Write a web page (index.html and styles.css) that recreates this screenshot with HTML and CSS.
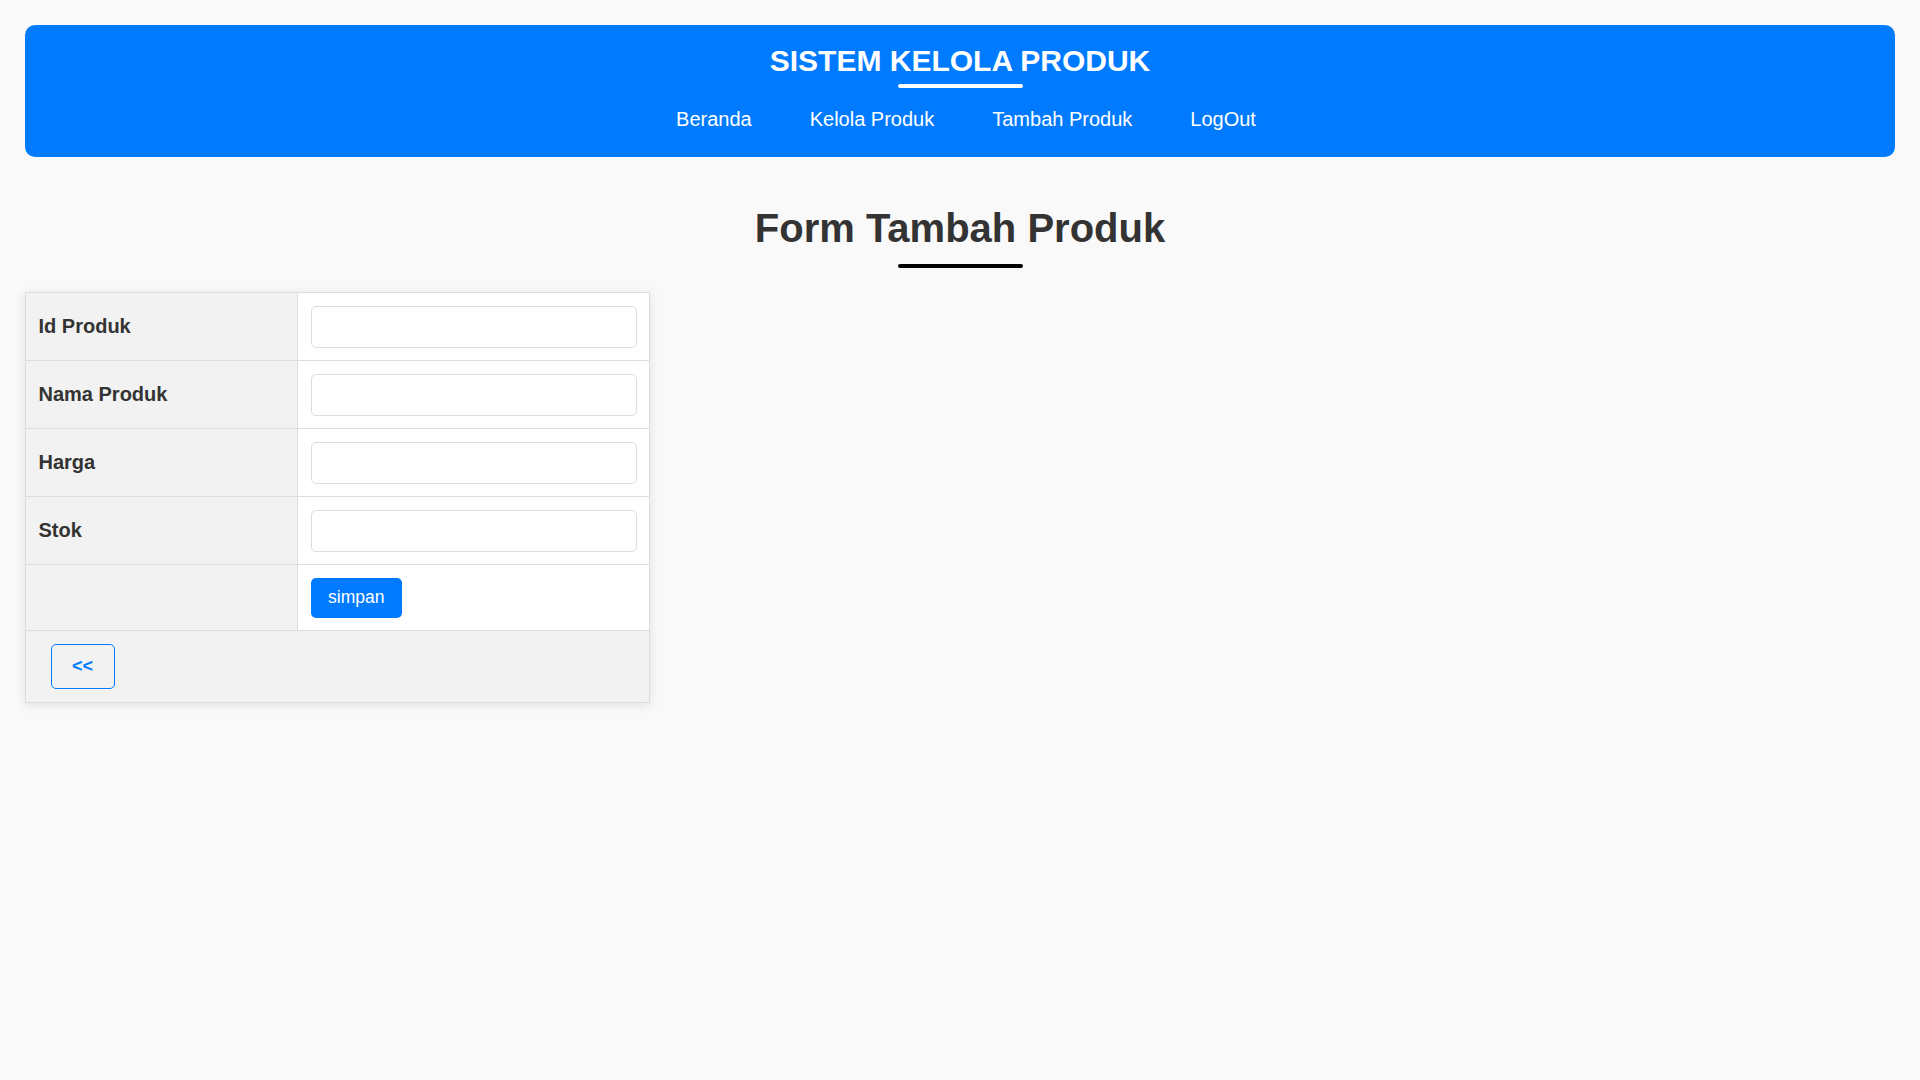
FILE: index.html
```html
<!DOCTYPE html>
<html lang="id">
<head>
<meta charset="utf-8">
<title>Form Tambah Produk</title>
<link rel="stylesheet" href="styles.css">
</head>
<body>
<div class="page">
  <header class="site-header">
    <h1 class="site-title">SISTEM KELOLA PRODUK</h1>
    <div class="title-line"></div>
    <nav class="site-nav">
      <a href="#">Beranda</a>
      <a href="#">Kelola Produk</a>
      <a href="#">Tambah Produk</a>
      <a href="#">LogOut</a>
    </nav>
  </header>

  <h2 class="page-title">Form Tambah Produk</h2>
  <div class="page-line"></div>

  <form class="product-form">
    <table class="form-table">
      <colgroup>
        <col class="col-label">
        <col class="col-input">
      </colgroup>
      <tr>
        <td class="label">Id Produk</td>
        <td class="field"><input type="text" class="text-input"></td>
      </tr>
      <tr>
        <td class="label">Nama Produk</td>
        <td class="field"><input type="text" class="text-input"></td>
      </tr>
      <tr>
        <td class="label">Harga</td>
        <td class="field"><input type="text" class="text-input"></td>
      </tr>
      <tr>
        <td class="label">Stok</td>
        <td class="field"><input type="text" class="text-input"></td>
      </tr>
      <tr>
        <td class="label"></td>
        <td class="field"><button type="button" class="btn-save">simpan</button></td>
      </tr>
      <tr>
        <td class="footer-cell" colspan="2"><a href="#" class="btn-back">&lt;&lt;</a></td>
      </tr>
    </table>
  </form>
</div>
</body>
</html>
```
FILE: styles.css
```css
* { box-sizing: border-box; }

html, body {
  margin: 0;
  padding: 0;
}

body {
  background: #f9f9f9;
  font-family: "Liberation Sans", Arial, sans-serif;
  color: #333;
}

.page {
  padding: 25px;
}

.site-header {
  background: #007bff;
  border-radius: 10px;
  padding: 18.75px 0 26px;
  text-align: center;
}

.site-title {
  margin: 0;
  font-size: 30px;
  font-weight: bold;
  color: #fff;
  line-height: normal;
}

.title-line {
  width: 125px;
  height: 4px;
  background: #fff;
  border-radius: 2px;
  margin: 6.5px auto 0;
}

.site-nav {
  margin-top: 19.3px;
  display: flex;
  justify-content: center;
  gap: 58px;
  padding-left: 12px;
}

.site-nav a {
  color: #fff;
  text-decoration: none;
  font-size: 20px;
  line-height: 23px;
}

.page-title {
  margin: 49.5px 0 0;
  text-align: center;
  font-size: 40px;
  font-weight: bold;
  color: #333;
  line-height: normal;
}

.page-line {
  width: 125px;
  height: 4px;
  background: #000;
  border-radius: 2px;
  margin: 13.3px auto 0;
}

.product-form {
  margin-top: 24px;
}

.form-table {
  width: 625px;
  table-layout: fixed;
  border-collapse: collapse;
  border: 1px solid #ddd;
  box-shadow: 0 2px 10px rgba(0, 0, 0, 0.1);
  background: #fff;
}

.col-label { width: 272px; }

.form-table td {
  border: 1px solid #ddd;
  padding: 12.5px;
  vertical-align: middle;
}

.label {
  background: #f2f2f2;
  font-weight: bold;
  font-size: 20px;
  color: #333;
}

.field {
  background: #fff;
}

.text-input {
  display: block;
  width: 100%;
  height: 42px;
  border: 1px solid #ddd;
  border-radius: 5px;
  background: #fff;
  font-family: inherit;
  font-size: 18px;
  padding: 0 10px;
}

.btn-save {
  display: block;
  height: 40px;
  padding: 0 17.5px;
  border: none;
  border-radius: 5px;
  background: #007bff;
  color: #fff;
  font-family: inherit;
  font-size: 17.5px;
}

.form-table .footer-cell {
  background: #f2f2f2;
  padding: 13px 12.5px 13px 24.5px;
}

.btn-back {
  display: flex;
  align-items: center;
  justify-content: center;
  width: 64px;
  height: 45px;
  border: 1px solid #007bff;
  border-radius: 5px;
  color: #007bff;
  font-weight: bold;
  font-size: 18px;
  text-decoration: none;
}
```
